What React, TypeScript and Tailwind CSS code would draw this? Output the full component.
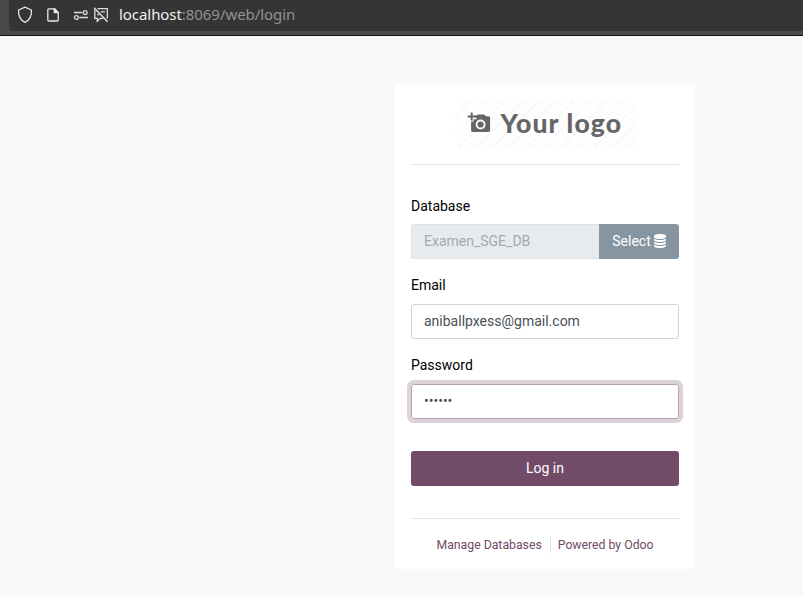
import React from "react";

function ShieldIcon() {
  return (
    <svg width="16" height="18" viewBox="0 0 16 18" fill="none" stroke="#e4e4e4" strokeWidth="1.3" strokeLinejoin="round">
      <path d="M8 1.2 L14.4 4 C14.9 9.6 12.6 14 8 16.3 C3.4 14 1.1 9.6 1.6 4 Z" />
    </svg>
  );
}

function PageIcon() {
  return (
    <svg width="12" height="14" viewBox="0 0 12 14" fill="none" stroke="#e8e8e8" strokeWidth="1.3" strokeLinejoin="round">
      <path d="M1.8 0.8 H7.6 L11.2 4.4 V12 a1 1 0 0 1 -1 1 H1.8 a1 1 0 0 1 -1 -1 V1.8 a1 1 0 0 1 1 -1 Z" />
      <path d="M7.3 0.8 V4.6 H11.2 Z" fill="#e8e8e8" />
    </svg>
  );
}

function PermissionsIcon() {
  return (
    <svg width="16" height="12" viewBox="0 0 16 12" fill="none" stroke="#dcdcdc" strokeWidth="1.3">
      <path d="M1 3.5 H9.3 M6.3 8.5 H15" />
      <circle cx="12.2" cy="3.5" r="1.9" />
      <circle cx="3.4" cy="8.5" r="1.9" />
    </svg>
  );
}

function BlockedMessageIcon() {
  return (
    <svg width="16" height="16" viewBox="0 0 16 16" fill="none" stroke="#e0e0e0" strokeWidth="1.3">
      <path d="M4.5 1.7 H14.3 V11.5 M1.8 2.8 V11.3 H4.3 V14.3 L7.4 11.3 H10.2 M7.8 4.8 H12 M4.2 7.6 H6.3" />
      <path d="M1 0.8 L14.6 14.8" strokeWidth="1.5" />
    </svg>
  );
}

function DatabaseIcon() {
  return (
    <svg className="mb-px" width="12" height="14" viewBox="0 0 1536 1792" fill="currentColor">
      <path d="M768 768q237 0 443-43t325-127v170q0 69-103 128t-280 93.5-385 34.5-385-34.5T103 896 0 768V598q119 84 325 127t443 43zm0 768q237 0 443-43t325-127v170q0 69-103 128t-280 93.5-385 34.5-385-34.5-280-93.5T0 1536v-170q119 84 325 127t443 43zm0-384q237 0 443-43t325-127v170q0 69-103 128t-280 93.5-385 34.5-385-34.5-280-93.5T0 1152V982q119 84 325 127t443 43zM768 0q208 0 385 34.5t280 93.5 103 128v128q0 69-103 128t-280 93.5T768 640t-385-34.5T103 512 0 384V256q0-69 103-128t280-93.5T768 0z" />
    </svg>
  );
}

function Logo() {
  return (
    <svg className="block" width="180" height="48" viewBox="0 0 180 48">
      <defs>
        <pattern id="stripes" width="17" height="17" patternUnits="userSpaceOnUse">
          <path d="M-2 19 L19 -2 M-2 2 L2 -2 M15 19 L19 15" stroke="#f6f6f6" strokeWidth="1.5" />
        </pattern>
      </defs>
      <rect width="180" height="48" fill="#fefefe" />
      <rect width="180" height="48" fill="url(#stripes)" />
      <g fill="#666" transform="translate(0.5 0)">
        <path d="M19.3 17.8 V15.6 H21 L22.2 14.6 H28.8 L30.3 16.3 H33 Q34.6 16.3 34.6 17.8 V30.6 Q34.6 32 33.2 32 H17 Q15.6 32 15.6 30.6 V21.6 H18 V19.2 H21 V17.8Z" />
        <path d="M15.2 12.5 H17.2 V15.5 H20 V17.4 H17.2 V20.5 H15.2 V17.4 H12.2 V15.5 H15.2Z" />
      </g>
      <circle cx="25.6" cy="24.5" r="4" fill="none" stroke="#fdfdfd" strokeWidth="1.8" />
      <text x="45.5" y="33" fill="#666" fontFamily="Lato, sans-serif" fontWeight="900" fontSize="26.5" textLength="120.5" lengthAdjust="spacing">
        Your logo
      </text>
    </svg>
  );
}

export default function App() {
  return (
    <div className="flex h-[597px] w-full flex-col overflow-hidden bg-[#f8f9fb] font-['Roboto',sans-serif] text-[14px] leading-[21px] text-black">
      <header className="h-9 shrink-0 border-b border-[#111] bg-[#4a4a4a] pl-[9px]">
        <div className="flex h-[31px] items-center rounded-bl-[4px] bg-[#353535] pl-2">
          <div className="pb-px"><ShieldIcon /></div>
          <div className="ml-[14px] pb-px"><PageIcon /></div>
          <div className="ml-[14px] pb-px"><PermissionsIcon /></div>
          <div className="ml-[4px] pb-px"><BlockedMessageIcon /></div>
          <div className="ml-[10px] whitespace-nowrap pb-[3px] font-['Noto_Sans',sans-serif] text-[15px] leading-[26px] tracking-[-0.06px] text-[#929292]">
            <span className="text-[#f0f0f0]">localhost</span>:8069/web/login
          </div>
        </div>
      </header>
      <main className="pl-[395px] pt-12">
        <section className="h-[485px] w-[300px] rounded-[3px] bg-white px-4 pt-4">
          <div className="flex h-[65px] justify-center border-b border-[#dee2e6]">
            <Logo />
          </div>
          <form className="pt-[31px]" onSubmit={(e) => e.preventDefault()}>
            <label className="block h-[21px]">Database</label>
            <div className="mt-[7px] flex h-[35px]">
              <div className="flex-1 rounded-l-[3px] border border-r-0 border-[#dee2e6] bg-[#e8ebee] px-3 py-[6px] text-[#a4a9ae]">Examen_SGE_DB</div>
              <button type="button" className="flex w-20 items-center justify-center gap-[3px] rounded-r-[3px] bg-[#8595a2] text-white">
                Select <DatabaseIcon />
              </button>
            </div>
            <label className="mt-4 block h-[21px]">Email</label>
            <div className="mt-2 h-[35px] rounded-[3px] border border-[#ced4da] px-3 py-[6px] text-[#495057]">aniballpxess@gmail.com</div>
            <label className="mt-4 block h-[21px]">Password</label>
            <div className="mt-2 h-[35px] rounded-[3px] border border-[#b59fb0] px-3 py-[6px] text-[#495057] shadow-[0_0_0_4px_#dcd2d9]">••••••</div>
            <button className="mt-8 block h-[35px] w-full rounded-[3px] bg-[#714b67] text-white">Log in</button>
          </form>
          <div className="mt-8 flex items-center justify-center border-t border-[#dee2e6] pt-[18px] text-[12.25px] leading-[15px] text-[#714b67]">
            <a className="border-r border-[#dee2e6] pr-2 pt-px">Manage Databases</a>
            <a className="pl-[7px] pt-px">Powered by Odoo</a>
          </div>
        </section>
      </main>
    </div>
  );
}
